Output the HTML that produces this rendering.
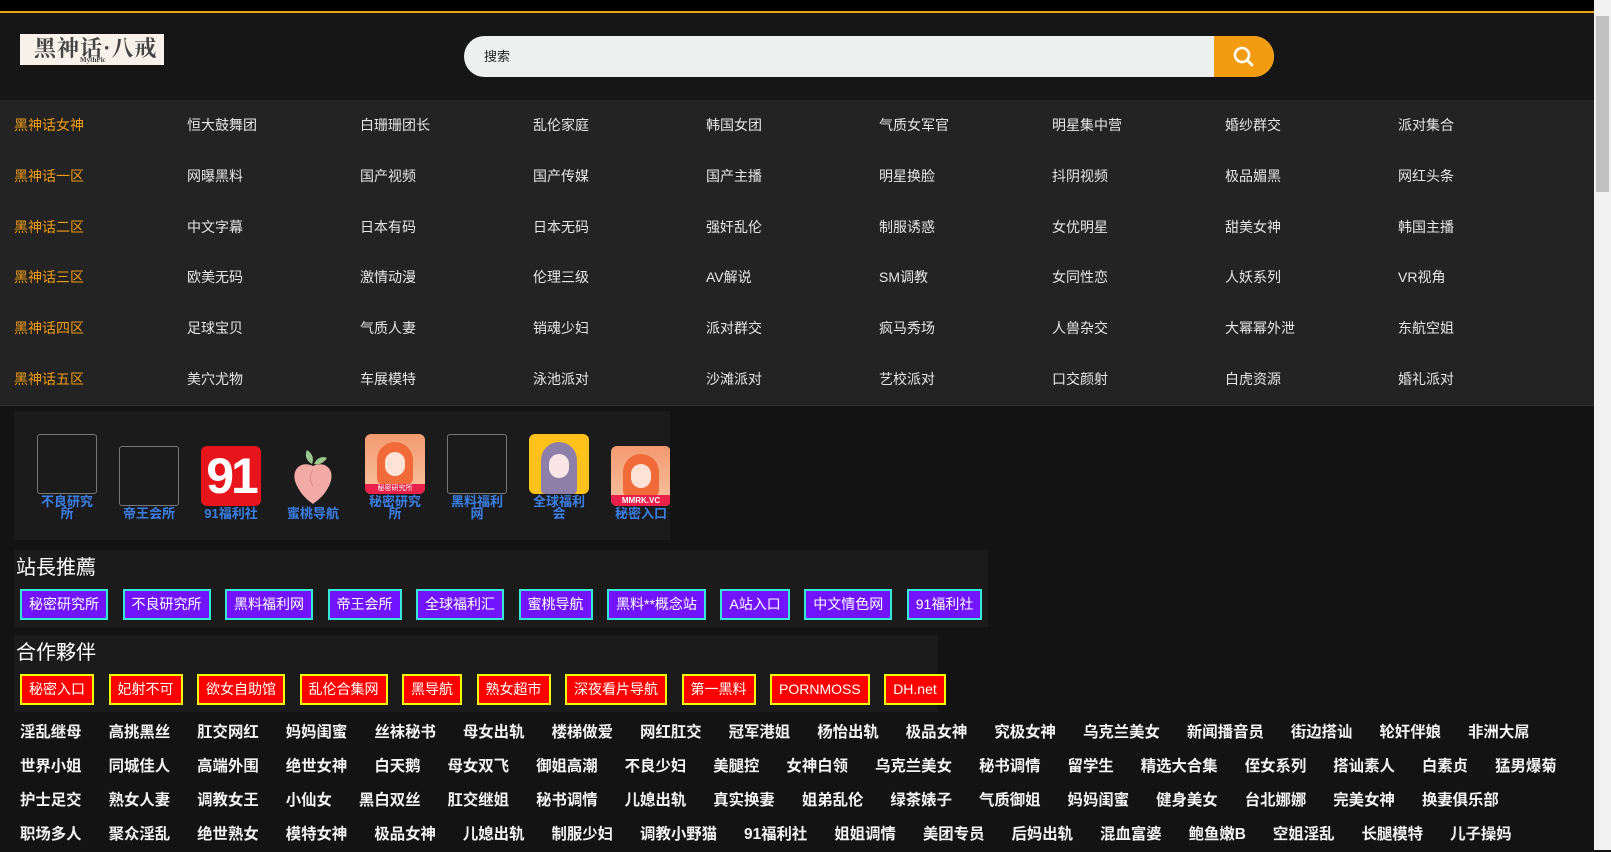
<!DOCTYPE html>
<html><head><meta charset="utf-8">
<style>
*{margin:0;padding:0;box-sizing:border-box}
html,body{width:1611px;height:850px;overflow:hidden;background:#131313;font-family:"Liberation Sans","Noto Sans CJK SC",sans-serif;}
.topbar{position:absolute;left:0;top:0;width:1594px;height:11px;background:#000}
.oline{position:absolute;left:0;top:11px;width:1594px;height:2px;background:#f0a21c}
.header{position:absolute;left:0;top:13px;width:1594px;height:87px;background:#161616}
.logo{position:absolute;left:20px;top:21px;width:144px;height:31px;background:#f8f1ea;color:#444;font-family:"Noto Serif CJK SC",serif;font-size:22px;font-weight:bold;line-height:28px;padding-left:14px;letter-spacing:1px;overflow:hidden}
.logo small{position:absolute;left:60px;top:22px;font-size:7px;line-height:8px;font-family:"Liberation Serif",serif;letter-spacing:0}
.search{position:absolute;left:464px;top:23px;width:810px;height:41px;background:#eef0f0;border-radius:21px;font-size:13px;color:#222;line-height:41px;padding-left:20px}
.sbtn{position:absolute;right:0;top:0;width:60px;height:41px;background:#f39c12;border-radius:0 21px 21px 0}
.nav{position:absolute;left:0;top:100px;width:1594px;height:306px;background:#232323;border-bottom:1px solid #2e2e2e}
.nav span{position:absolute;font-size:14px;color:#e6e6e6;line-height:16px;white-space:nowrap}
.nav span.o{color:#f39c12}
.scroll{position:absolute;right:0;top:0;width:17px;height:850px;background:#f1f1f1}
.thumb{position:absolute;right:2px;top:16px;width:13px;height:176px;background:#c1c1c1}
.box{position:absolute;background:#1b1b1b}
.icons{left:14px;top:411px;width:656px;height:129px;display:flex;align-items:flex-end;padding:0 0 20px 12px;overflow:hidden}
.it{width:82px;flex-shrink:0;display:flex;flex-direction:column;align-items:center}
.it .im{width:60px;height:60px;border-radius:6px;overflow:hidden;position:relative}
.it .br{border:1px solid #777;border-radius:3px}
.it .lb{color:#3b7fe6;font-size:13px;font-weight:bold;line-height:12px;text-align:center;width:60px;margin-top:2px}
.ttl{position:absolute;left:2px;top:3px;font-size:20px;color:#fff;line-height:30px}
.btns{position:absolute;left:6px;top:39px;display:flex}
.b{height:31px;line-height:27px;font-size:14px;color:#fff;padding:0 7px;margin-right:14.5px;white-space:nowrap}
.bp{background:#7214ff;border:2px solid #35e8d8}
.br2{background:#ff0000;border:2px solid #f0ff00}
.rows{position:absolute;left:20px;top:716px;width:1570px}
.row{height:34px;line-height:34px;white-space:nowrap}
.row span{font-size:15.4px;font-weight:bold;color:#f2f2f2;margin-right:27px}
</style></head><body>
<div class="topbar"></div><div class="oline"></div>
<div class="header">
<div class="logo">黑神话·八戒<small>MythPic</small></div>
<div class="search">搜索<div class="sbtn"><svg width="60" height="41" viewBox="0 0 60 41"><circle cx="28" cy="19" r="7" fill="none" stroke="#fff" stroke-width="2.6"/><line x1="33" y1="24" x2="38" y2="29" stroke="#fff" stroke-width="2.8" stroke-linecap="round"/></svg></div></div>
</div>
<div class="nav" id="nav"></div>
<div class="box icons">
 <div class="it"><div class="im br"></div><div class="lb">不良研究<br>所</div></div>
 <div class="it"><div class="im br"></div><div class="lb">帝王会所</div></div>
 <div class="it"><div class="im" style="background:#e8141b;color:#fff;font-weight:bold;font-size:50px;line-height:60px;text-align:center;letter-spacing:-3px">91</div><div class="lb">91福利社</div></div>
 <div class="it"><div class="im"><svg width="60" height="60"><path d="M30 20 C18 14 6 24 14 40 C20 52 28 56 30 58 C32 56 40 52 46 40 C54 24 42 14 30 20Z" fill="#f2aaa6"/><path d="M29 18 C22 14 22 8 24 4 C30 8 31 13 29 18Z" fill="#9cc68e"/><path d="M31 18 C34 11 40 10 44 12 C40 18 35 19 31 18Z" fill="#9cc68e"/><path d="M30 24 C26 30 27 36 30 40" stroke="#d88" fill="none"/></svg></div><div class="lb">蜜桃导航</div></div>
 <div class="it"><div class="im" style="background:linear-gradient(#f49a70,#f7c3a0)"><div style="position:absolute;left:12px;top:8px;width:36px;height:44px;border-radius:18px 18px 8px 8px;background:#f06a3a"></div><div style="position:absolute;left:20px;top:18px;width:20px;height:24px;border-radius:10px;background:#fde3d6"></div><div style="position:absolute;bottom:0;left:0;width:60px;height:10px;background:#e8204a;color:#fff;font-size:7px;line-height:10px;text-align:center">秘密研究所</div></div><div class="lb">秘密研究<br>所</div></div>
 <div class="it"><div class="im br"></div><div class="lb">黑料福利<br>网</div></div>
 <div class="it"><div class="im" style="background:#ffc21a"><div style="position:absolute;left:12px;top:8px;width:36px;height:52px;border-radius:18px 18px 4px 4px;background:#8d7fa8"></div><div style="position:absolute;left:20px;top:20px;width:20px;height:24px;border-radius:10px;background:#fbe6e6"></div></div><div class="lb">全球福利<br>会</div></div>
 <div class="it"><div class="im" style="background:linear-gradient(#f49a70,#f7c3a0)"><div style="position:absolute;left:12px;top:8px;width:36px;height:44px;border-radius:18px 18px 8px 8px;background:#f06a3a"></div><div style="position:absolute;left:20px;top:18px;width:20px;height:24px;border-radius:10px;background:#fde3d6"></div><div style="position:absolute;bottom:0;left:0;width:60px;height:11px;background:#e8204a;color:#fff;font-size:8px;font-weight:bold;line-height:11px;text-align:center">MMRK.VC</div></div><div class="lb">秘密入口</div></div>
</div>
<div class="box" style="left:14px;top:550px;width:974px;height:77px">
 <div class="ttl">站長推薦</div>
 <div class="btns">
  <div class="b bp">秘密研究所</div><div class="b bp">不良研究所</div><div class="b bp">黑料福利网</div><div class="b bp">帝王会所</div><div class="b bp">全球福利汇</div><div class="b bp">蜜桃导航</div><div class="b bp">黑料**概念站</div><div class="b bp">A站入口</div><div class="b bp">中文情色网</div><div class="b bp">91福利社</div>
 </div>
</div>
<div class="box" style="left:14px;top:635px;width:924px;height:77px">
 <div class="ttl">合作夥伴</div>
 <div class="btns">
  <div class="b br2">秘密入口</div><div class="b br2">妃射不可</div><div class="b br2">欲女自助馆</div><div class="b br2">乱伦合集网</div><div class="b br2">黑导航</div><div class="b br2">熟女超市</div><div class="b br2">深夜看片导航</div><div class="b br2">第一黑料</div><div class="b br2">PORNMOSS</div><div class="b br2">DH.net</div>
 </div>
</div>
<div class="rows">
<div class="row"><span>淫乱继母</span><span>高挑黑丝</span><span>肛交网红</span><span>妈妈闺蜜</span><span>丝袜秘书</span><span>母女出轨</span><span>楼梯做爱</span><span>网红肛交</span><span>冠军港姐</span><span>杨怡出轨</span><span>极品女神</span><span>究极女神</span><span>乌克兰美女</span><span>新闻播音员</span><span>街边搭讪</span><span>轮奸伴娘</span><span>非洲大屌</span></div>
<div class="row"><span>世界小姐</span><span>同城佳人</span><span>高端外围</span><span>绝世女神</span><span>白天鹅</span><span>母女双飞</span><span>御姐高潮</span><span>不良少妇</span><span>美腿控</span><span>女神白领</span><span>乌克兰美女</span><span>秘书调情</span><span>留学生</span><span>精选大合集</span><span>侄女系列</span><span>搭讪素人</span><span>白素贞</span><span>猛男爆菊</span></div>
<div class="row"><span>护士足交</span><span>熟女人妻</span><span>调教女王</span><span>小仙女</span><span>黑白双丝</span><span>肛交继姐</span><span>秘书调情</span><span>儿媳出轨</span><span>真实换妻</span><span>姐弟乱伦</span><span>绿茶婊子</span><span>气质御姐</span><span>妈妈闺蜜</span><span>健身美女</span><span>台北娜娜</span><span>完美女神</span><span>换妻俱乐部</span></div>
<div class="row"><span>职场多人</span><span>聚众淫乱</span><span>绝世熟女</span><span>模特女神</span><span>极品女神</span><span>儿媳出轨</span><span>制服少妇</span><span>调教小野猫</span><span>91福利社</span><span>姐姐调情</span><span>美团专员</span><span>后妈出轨</span><span>混血富婆</span><span>鲍鱼嫩B</span><span>空姐淫乱</span><span>长腿模特</span><span>儿子操妈</span></div>
</div>
<div class="scroll"><div class="thumb"></div></div>
<script>
var d=[["黑神话女神","恒大鼓舞团","白珊珊团长","乱伦家庭","韩国女团","气质女军官","明星集中营","婚纱群交","派对集合"],
["黑神话一区","网曝黑料","国产视频","国产传媒","国产主播","明星换脸","抖阴视频","极品媚黑","网红头条"],
["黑神话二区","中文字幕","日本有码","日本无码","强奸乱伦","制服诱惑","女优明星","甜美女神","韩国主播"],
["黑神话三区","欧美无码","激情动漫","伦理三级","AV解说","SM调教","女同性恋","人妖系列","VR视角"],
["黑神话四区","足球宝贝","气质人妻","销魂少妇","派对群交","疯马秀场","人兽杂交","大幂幂外泄","东航空姐"],
["黑神话五区","美穴尤物","车展模特","泳池派对","沙滩派对","艺校派对","口交颜射","白虎资源","婚礼派对"]];
var h="";for(var r=0;r<6;r++)for(var c=0;c<9;c++)h+='<span class="'+(c==0?'o':'')+'" style="left:'+(14+c*173)+'px;top:'+(17+r*50.8)+'px">'+d[r][c]+'</span>';
document.getElementById("nav").innerHTML=h;
</script>
</body></html>
